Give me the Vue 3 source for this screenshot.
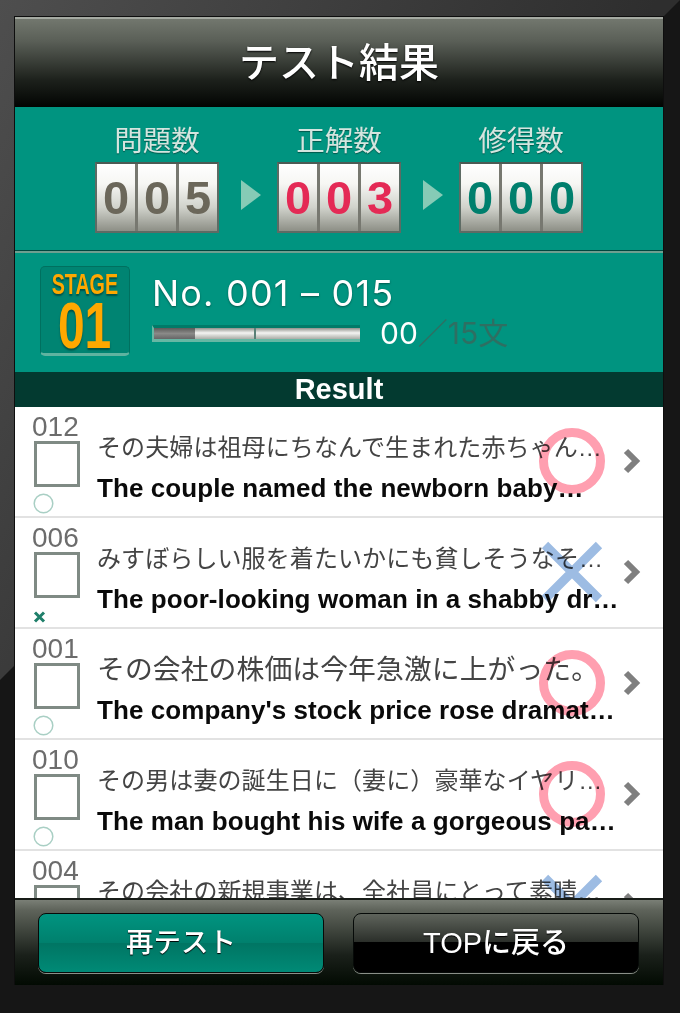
<script setup>
const counters = [
  { label: '問題数', digits: ['0', '0', '5'], tone: 'gray' },
  { label: '正解数', digits: ['0', '0', '3'], tone: 'red' },
  { label: '修得数', digits: ['0', '0', '0'], tone: 'green' },
]
const rows = [
  { no: '012', jp: 'その夫婦は祖母にちなんで生まれた赤ちゃん…', en: 'The couple named the newborn baby…', ok: true },
  { no: '006', jp: 'みすぼらしい服を着たいかにも貧しそうなそ…', en: 'The poor-looking woman in a shabby dr…', ok: false },
  { no: '001', jp: 'その会社の株価は今年急激に上がった。', en: "The company's stock price rose dramat…", ok: true, big: true },
  { no: '010', jp: 'その男は妻の誕生日に（妻に）豪華なイヤリ…', en: 'The man bought his wife a gorgeous pa…', ok: true },
  { no: '004', jp: 'その会社の新規事業は、全社員にとって素晴…', en: '', ok: false },
]
</script>

<template>
  <div class="page">
    <div class="screen">
      <header class="title">テスト結果</header>
      <section class="scores">
        <template v-for="(c, i) in counters" :key="c.label">
          <span v-if="i" class="arrow"></span>
          <div class="counter">
            <div class="counter-label">{{ c.label }}</div>
            <div class="reels" :class="c.tone">
              <span v-for="(d, j) in c.digits" :key="j" class="reel">{{ d }}</span>
            </div>
          </div>
        </template>
      </section>
      <section class="stage">
        <div class="badge">
          <span class="badge-top">STAGE</span>
          <span class="badge-num">01</span>
        </div>
        <div class="stage-info">
          <div class="range">No. 001 – 015</div>
          <div class="progress-row">
            <div class="bar"><span class="bar-fill"></span><span class="bar-tick"></span></div>
            <div class="count"><b>00</b><span>／15文</span></div>
          </div>
        </div>
      </section>
      <div class="result-bar">Result</div>
      <ul class="list">
        <li v-for="r in rows" :key="r.no" class="row">
          <div class="mark">
            <span class="no">{{ r.no }}</span>
            <span class="box"></span>
            <svg class="tiny" viewBox="0 0 21 21">
              <circle v-if="r.ok" cx="10.500" cy="10.500" r="9.300" fill="none" stroke="#a9cfc4" stroke-width="1.500" />
              <path v-else d="M2 8.500 11 17.500M11 8.500 2 17.500" stroke="#1f7f6a" stroke-width="3" />
            </svg>
          </div>
          <div class="texts">
            <div class="jp" :class="{ big: r.big }">{{ r.jp }}</div>
            <div class="en">{{ r.en }}</div>
          </div>
          <svg class="stamp" viewBox="0 0 76 76">
            <circle v-if="r.ok" cx="38" cy="38" r="28.500" fill="none" stroke="#ff9fb0" stroke-width="9" />
            <path v-else d="M11 11 65 65M65 11 11 65" stroke="#9dbce3" stroke-width="9" />
          </svg>
          <svg class="chev" viewBox="0 0 18 26"><path d="M3 3 13 13 3 23" fill="none" stroke="#7f7f7f" stroke-width="6" /></svg>
        </li>
      </ul>
      <footer class="footer">
        <button class="btn primary">再テスト</button>
        <button class="btn dark">TOPに戻る</button>
      </footer>
    </div>
  </div>
</template>

<style>
html, body { margin: 0; background: #161616; }
</style>

<style scoped>
.page {
  width: 680px;
  height: 1013px;
  box-sizing: border-box;
  padding: 16px 16px 28px 14px;
  background: linear-gradient(120deg, #4e4e4e, #2e2e2e 52%);
  position: relative;
  overflow: hidden;
  font-family: "Liberation Sans", "Noto Sans CJK JP", sans-serif;
}
.page::before {
  content: "";
  position: absolute;
  inset: 0;
  background: #161616;
  clip-path: polygon(680px 0, 680px 1013px, 0 1013px, 0 680px);
}
.screen {
  position: relative;
  height: 969px;
  display: flex;
  flex-direction: column;
  border: 1px solid #0e0e0e;
  border-bottom: 0;
  box-sizing: border-box;
  overflow: hidden;
  filter: blur(.45px);
}
.title {
  height: 90px;
  flex: none;
  box-sizing: border-box;
  border-top: 2px solid #a5aaa2;
  background: linear-gradient(#72776e 0, #5a5f57 25%, #1c201b 70%, #020402 100%);
  color: #fff;
  font-size: 40px;
  font-weight: 500;
  line-height: 88px;
  text-align: center;
  text-shadow: 0 1px 2px #000;
}
.scores {
  flex: none;
  height: 144px;
  background: #009480;
  border-bottom: 1px solid #00483e;
  box-sizing: border-box;
  display: flex;
  justify-content: center;
  align-items: flex-start;
  gap: 19px;
  padding-top: 18px;
}
.counter { width: 124px; }
.counter-label {
  text-align: center;
  color: #d4e5df;
  font-size: 28.500px;
  line-height: 32px;
  text-shadow: 0 1px 1px #00594c;
}
.reels {
  display: flex;
  margin-top: 5px;
  height: 71px;
  box-sizing: border-box;
  border: 2px solid #5d6b64;
  border-top-color: #4c5a54;
  background: #777870;
  gap: 3px;
}
.reel {
  flex: 1;
  background: linear-gradient(#fff 0, #f6f6f3 30%, #d0d2cb 65%, #8d8f86 100%);
  text-align: center;
  font-weight: 700;
  font-size: 47px;
  line-height: 68px;
}
.gray { color: #6b675a; }
.red { color: #e42a55; }
.green { color: #007f6d; }
.arrow {
  width: 0;
  height: 0;
  margin: 55px -3px 0 3px;
  border-left: 20px solid #86cbb6;
  border-top: 15.500px solid transparent;
  border-bottom: 15.500px solid transparent;
}
.stage {
  flex: none;
  height: 121px;
  background: #009480;
  border-top: 2px solid #6f9f90;
  box-sizing: border-box;
  display: flex;
  padding: 13px 0 0 25px;
  gap: 22px;
}
.badge {
  width: 90px;
  height: 90px;
  box-sizing: border-box;
  border-radius: 5px;
  background: #008472;
  border: 1px solid #00705f;
  border-bottom: 3px solid #5fb3a0;
  display: flex;
  flex-direction: column;
  align-items: center;
  font-weight: 700;
  color: #ffa800;
  text-shadow: 0 2px 2px #005246;
}
.badge-top { font-size: 29px; height: 26px; line-height: 26px; margin-top: 4px; transform: scaleX(.68); }
.badge-num { font-size: 64px; height: 54px; line-height: 54px; margin-top: 2px; transform: scaleX(.75); }
.stage-info { padding-top: 7px; }
.range {
  color: #fff;
  font-family: Inter, "Liberation Sans", sans-serif;
  font-size: 36px;
  line-height: 40px;
  letter-spacing: 1.200px;
  text-shadow: 0 1px 2px #00594c;
}
.progress-row { display: flex; align-items: center; gap: 20px; margin-top: 2px; }
.bar {
  position: relative;
  width: 208px;
  height: 17px;
  box-sizing: border-box;
  border-top: 3px solid #007a68;
  border-bottom: 3px solid #67b7a4;
  border-left: 2px solid #67b7a4;
  background: linear-gradient(#8f918b, #f4f4f2 45%, #a9aca6);
}
.bar-fill {
  position: absolute;
  left: 0;
  top: 0;
  bottom: 0;
  width: 41px;
  background: linear-gradient(#5a5a58, #8a8a88 50%, #666);
}
.bar-tick { position: absolute; left: 100px; top: 0; bottom: 0; width: 2px; background: #5a8077; }
.count { font-size: 30px; line-height: 36px; color: #2e6f62; font-family: Inter, "Noto Sans CJK JP", sans-serif; }
.count b { font-weight: 400; color: #fff; }
.result-bar {
  flex: none;
  height: 35px;
  background: #033a30;
  color: #fff;
  font-weight: 700;
  font-size: 29px;
  line-height: 35px;
  text-align: center;
}
.list { flex: 1; min-height: 0; margin: 0; padding: 0; list-style: none; background: #fff; overflow: hidden; }
.row {
  position: relative;
  height: 111px;
  box-sizing: border-box;
  border-bottom: 2px solid #e2e2e2;
  display: flex;
  padding-left: 16px;
}
.mark { width: 51px; display: flex; flex-direction: column; align-items: flex-start; flex: none; }
.no { font-size: 28px; line-height: 28px; color: #6c6c6c; margin: 6px 0 0 1px; }
.box { width: 46px; height: 46px; box-sizing: border-box; border: 3px solid #7f8a84; margin-left: 3px; }
.tiny { width: 21px; height: 21px; margin-top: 6px; margin-left: 2px; overflow: visible; }
.texts { margin-left: 15px; width: 524px; overflow: hidden; white-space: nowrap; }
.jp { font-size: 24px; line-height: 30px; margin-top: 26px; color: #444; letter-spacing: .1px; }
.jp.big { font-size: 27.800px; }
.en { font-size: 26px; line-height: 30px; margin-top: 10px; font-weight: 700; color: #0a0a0a; letter-spacing: .08px; }
.stamp { position: absolute; left: 519px; top: 16px; width: 76px; height: 76px; mix-blend-mode: multiply; }
.chev { position: absolute; left: 608px; top: 41px; width: 18px; height: 26px; }
.footer {
  flex: none;
  height: 87px;
  box-sizing: border-box;
  border-top: 2px solid #181c18;
  background: linear-gradient(#7a7f76 0, #5e635a 12%, #1a201a 65%, #020a02 100%);
  display: flex;
  gap: 29px;
  padding: 13px 23px 0;
}
.btn {
  width: 286px;
  height: 60px;
  box-sizing: border-box;
  border-radius: 8px;
  border: 1.500px solid #060a08;
  box-shadow: 0 1px 0 #8a8f88;
  color: #fff;
  font: 500 29px/1 "Liberation Sans", "Noto Sans CJK JP", sans-serif;
  text-shadow: 0 1px 1px #000;
  padding: 0;
}
.primary { background: linear-gradient(#009480, #00806d 50%, #007563 50%, #008a76); font-size: 27.500px; }
.dark { background: linear-gradient(#5f645c, #2a2e29 49%, #000 49%, #000); }
</style>
